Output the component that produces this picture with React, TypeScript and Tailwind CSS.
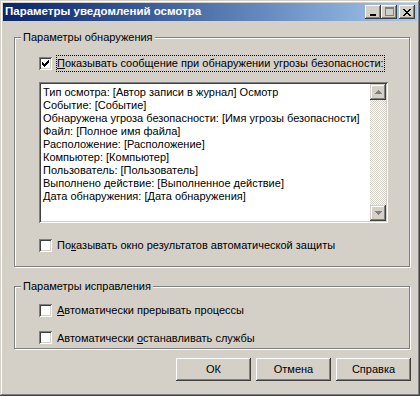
import React from "react";

const font = { fontFamily: '"Liberation Sans", Arial, sans-serif' };

function Check({ checked }: { checked?: boolean }) {
  return (
    <div className="relative w-[13px] h-[13px] shrink-0 bg-white shadow-[inset_1px_1px_#808080,inset_-1px_-1px_#ffffff,inset_2px_2px_#404040,inset_-2px_-2px_#d4d0c8]">
      {checked && (
        <svg className="absolute left-[3px] top-[3px]" width="7" height="7" viewBox="0 0 7 7" shapeRendering="crispEdges">
          <rect x="0" y="2" width="1" height="3" fill="#000" />
          <rect x="1" y="3" width="1" height="3" fill="#000" />
          <rect x="2" y="4" width="1" height="3" fill="#000" />
          <rect x="3" y="3" width="1" height="3" fill="#000" />
          <rect x="4" y="2" width="1" height="3" fill="#000" />
          <rect x="5" y="1" width="1" height="3" fill="#000" />
          <rect x="6" y="0" width="1" height="3" fill="#000" />
        </svg>
      )}
    </div>
  );
}

function TitleBtn({ children }: { children: React.ReactNode }) {
  return (
    <div className="w-[16px] h-[14px] bg-[#d4d0c8] flex items-center justify-center shadow-[inset_-1px_-1px_#404040,inset_1px_1px_#ffffff,inset_-2px_-2px_#808080,inset_2px_2px_#d4d0c8]">
      {children}
    </div>
  );
}

function Button({ children }: { children: React.ReactNode }) {
  return (
    <div className="w-[75px] h-[23px] bg-[#d4d0c8] flex items-center justify-center text-[11px] text-black shadow-[inset_-1px_-1px_#404040,inset_1px_1px_#ffffff,inset_-2px_-2px_#808080,inset_2px_2px_#d4d0c8]">
      {children}
    </div>
  );
}

function ScrollBtn({ up }: { up?: boolean }) {
  return (
    <div className="w-[16px] h-[16px] bg-[#d4d0c8] flex items-center justify-center shadow-[inset_-1px_-1px_#404040,inset_1px_1px_#d4d0c8,inset_-2px_-2px_#808080,inset_2px_2px_#ffffff]">
      <svg width="7" height="4" viewBox="0 0 7 4" shapeRendering="crispEdges">
        {up ? (
          <path d="M3 0h1v1h1v1h1v1h1v1H0V3h1V2h1V1h1z" fill="#808080" />
        ) : (
          <path d="M0 0h7v1H6v1H5v1H4v1H3V3H2V2H1V1H0z" fill="#808080" />
        )}
      </svg>
    </div>
  );
}

const lines = [
  "Тип осмотра: [Автор записи в журнал] Осмотр",
  "Событие: [Событие]",
  "Обнаружена угроза безопасности: [Имя угрозы безопасности]",
  "Файл: [Полное имя файла]",
  "Расположение: [Расположение]",
  "Компьютер: [Компьютер]",
  "Пользователь: [Пользователь]",
  "Выполнено действие: [Выполненное действие]",
  "Дата обнаружения: [Дата обнаружения]",
];

export default function App() {
  return (
    <div
      style={font}
      className="w-[420px] h-[396px] bg-[#d4d0c8] p-[3px] flex flex-col text-[11px] text-black shadow-[inset_-1px_-1px_#404040,inset_1px_1px_#d4d0c8,inset_-2px_-2px_#808080,inset_2px_2px_#ffffff]"
    >
      {/* Title bar */}
      <div className="h-[18px] flex items-center bg-gradient-to-r from-[#0a246a] to-[#a6caf0] pl-[2px] pr-[2px]">
        <span className="text-white font-bold text-[11.5px] leading-none flex-1">Параметры уведомлений осмотра</span>
        <TitleBtn>
          <div className="w-[6px] h-[2px] bg-black mt-[6px] mr-[1px]" />
        </TitleBtn>
        <TitleBtn>
          <div className="w-[9px] h-[9px] border border-[#808080] border-t-2 mb-[1px]" />
        </TitleBtn>
        <div className="w-[2px]" />
        <TitleBtn>
          <svg width="8" height="7" viewBox="0 0 8 7" shapeRendering="crispEdges">
            <path d="M0 0h2v1h1v1h2V1h1V0h2v1H7v1H6v1H5v1h1v1h1v1h1v1H6V6H5V5H3v1H2v1H0V6h1V5h1V4h1V3H2V2H1V1H0z" fill="#000" />
          </svg>
        </TitleBtn>
      </div>

      {/* Body */}
      <div className="flex flex-col pl-[11px] pr-[7px]">
        {/* Group 1 */}
        <div className="relative mt-[16px] h-[230px] border border-[#808080] shadow-[inset_1px_1px_#ffffff,1px_1px_#ffffff]">
          <span className="absolute left-[6px] top-[-8px] bg-[#d4d0c8] px-[2px] leading-[14px]">Параметры обнаружения</span>
          <div className="flex flex-col pl-[24px] pr-[21px] pt-[17px]">
            <div className="flex items-center">
              <Check checked />
              <span className="ml-[4px] px-[1px] h-[17px] flex items-center outline outline-1 outline-dotted outline-black -outline-offset-1 whitespace-nowrap">
                <span><u>П</u>оказывать сообщение при обнаружении угрозы безопасности:</span>
              </span>
            </div>
            <div className="mt-[10px] h-[141px] bg-white flex shadow-[inset_1px_1px_#808080,inset_-1px_-1px_#ffffff,inset_2px_2px_#404040,inset_-2px_-2px_#d4d0c8] p-[2px]">
              <div className="flex-1 pl-[2px] pt-[2px] leading-[13px] whitespace-nowrap overflow-hidden">
                {lines.map((l) => (
                  <div key={l}>{l}</div>
                ))}
              </div>
              <div className="w-[16px] flex flex-col">
                <ScrollBtn up />
                <div className="flex-1 bg-[repeating-conic-gradient(#ffffff_0_25%,#d4d0c8_0_50%)] bg-[length:2px_2px]" />
                <ScrollBtn />
              </div>
            </div>
            <div className="flex items-center mt-[14px]">
              <Check />
              <span className="ml-[5px] whitespace-nowrap">
                По<u>к</u>азывать окно результатов автоматической защиты
              </span>
            </div>
          </div>
        </div>

        {/* Group 2 */}
        <div className="relative mt-[19px] h-[63px] border border-[#808080] shadow-[inset_1px_1px_#ffffff,1px_1px_#ffffff]">
          <span className="absolute left-[6px] top-[-8px] bg-[#d4d0c8] px-[2px] leading-[14px]">Параметры исправления</span>
          <div className="flex flex-col pl-[24px] pt-[15px] gap-[11px]">
            <div className="flex items-center">
              <Check />
              <span className="ml-[5px] whitespace-nowrap">
                <u>А</u>втоматически прерывать процессы
              </span>
            </div>
            <div className="flex items-center">
              <Check />
              <span className="ml-[5px] whitespace-nowrap">
                Автоматически <u>о</u>станавливать службы
              </span>
            </div>
          </div>
        </div>

        {/* Buttons */}
        <div className="flex justify-end gap-[5px] mt-[9px] mr-[-1px]">
          <Button>ОК</Button>
          <Button>Отмена</Button>
          <Button>Справка</Button>
        </div>
      </div>
    </div>
  );
}
